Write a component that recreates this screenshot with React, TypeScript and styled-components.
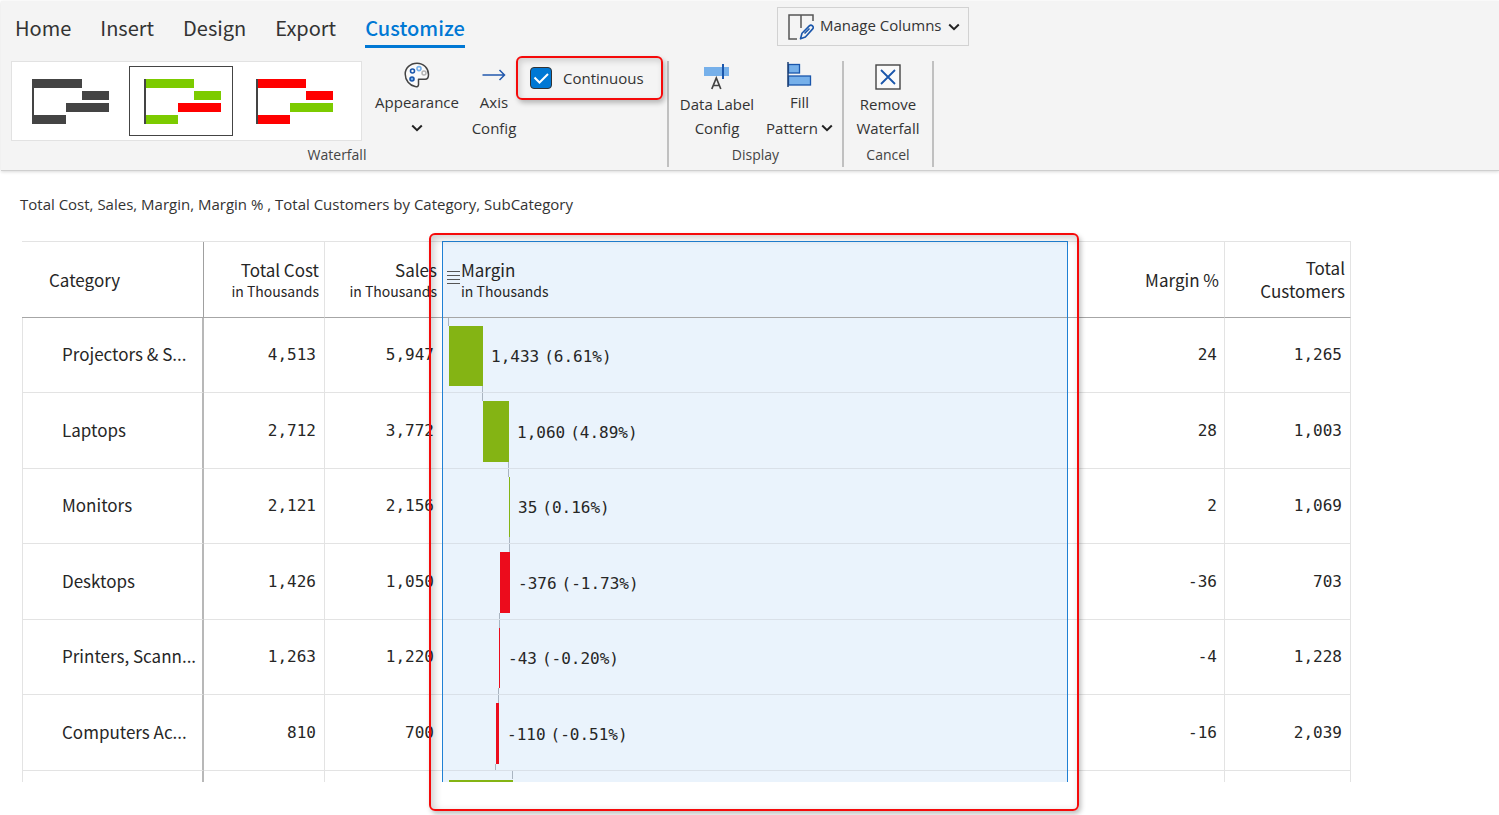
import React from 'react';
import styled, { createGlobalStyle, css } from 'styled-components';

const sans = '"Noto Sans CJK SC", "Noto Sans", sans-serif';
const label = '"Open Sans", "Noto Sans", sans-serif';
const mono = '"DejaVu Sans Mono", "Liberation Mono", monospace';

const GlobalStyle = createGlobalStyle`
  *, *::before, *::after { box-sizing: border-box; }
  body { margin: 0; background: #fff; color: #262626; font-family: ${sans}; font-size: 15px; }
  button { font: inherit; color: inherit; background: none; border: 0; padding: 0; cursor: pointer; }
`;

/* ---------- ribbon ---------- */

const Ribbon = styled.header`
  margin: 1px 0 0 1px;
  background: #f4f4f4;
  border-bottom: 1px solid #cfcfcf;
  box-shadow: 0 1px 3px rgba(0, 0, 0, 0.15);
  font-family: ${label};
`;

const TopRow = styled.div`
  display: flex;
  align-items: flex-start;
  height: 55px;
  padding: 6px 0 0 14px;
`;

const Tabs = styled.nav`
  display: flex;
  gap: 29px;
  width: 762px;
  padding-top: 5px;
  font-family: ${sans};
`;

const Tab = styled.button<{ $active?: boolean }>`
  height: 36px;
  font-size: 20px;
  line-height: 30px;
  padding-bottom: 2px;
  color: #333;
  border-bottom: 3px solid transparent;
  ${p => p.$active && css`
    color: #0078d4;
    font-weight: 500;
    border-bottom-color: #0078d4;
  `}
`;

const ManageButton = styled.button`
  display: flex;
  align-items: center;
  gap: 6px;
  height: 39px;
  padding: 0 8px 0 10px;
  border: 1px solid #d2d2d2;
  color: #333;
  line-height: 24px;
`;

const ManageText = styled.span`
  padding-bottom: 3px;
`;

const Groups = styled.div`
  display: flex;
  padding: 0 0 3px 6px;
`;

const Group = styled.section`
  display: flex;
  flex-direction: column;
  justify-content: space-between;
  height: 106px;
  margin-top: 5px;
  padding: 0 4px;
  border-right: 2px solid #c0c0c0;
`;

const GroupTools = styled.div`
  display: flex;
  align-items: flex-start;
  height: 80px;
`;

const GroupName = styled.h2`
  margin: 0;
  height: 24px;
  font-size: 14px;
  font-weight: 400;
  line-height: 24px;
  text-align: center;
  color: #444;
`;

const Gallery = styled.div`
  display: flex;
  align-items: center;
  gap: 8px;
  width: 351px;
  height: 80px;
  padding: 0 5px;
  background: #fff;
  border: 1px solid #e2e2e2;
`;

const Preset = styled.button<{ $active?: boolean }>`
  width: 104px;
  height: 70px;
  padding: 2px 0 0 4px;
  border: 1px solid ${p => (p.$active ? '#444' : 'transparent')};
  display: grid;
  place-items: center;
`;

const IconSlot = styled.span`
  display: grid;
  place-items: center;
  height: 30px;
`;

const Tool = styled.button<{ $width: number; $loose?: boolean }>`
  display: flex;
  flex-direction: column;
  align-items: center;
  width: ${p => p.$width}px;
  color: #333;
  line-height: ${p => (p.$loose ? 26 : 24)}px;
  white-space: nowrap;
  svg { flex: none; }
  ${IconSlot} { height: ${p => (p.$loose ? 28 : 31)}px; }
`;

const WithArrow = styled.span`
  display: flex;
  align-items: center;
  gap: 3px;
  min-height: 26px;
`;

const CheckField = styled.label`
  display: flex;
  align-items: center;
  gap: 11px;
  height: 44px;
  width: 147px;
  margin-top: -5px;
  padding: 0 12px;
  border: 2px solid #f50a0a;
  border-radius: 6px;
  box-shadow: 2px 3px 5px rgba(0, 0, 0, 0.25), inset 2px 3px 6px rgba(0, 0, 0, 0.15);
  color: #333;
`;

const CheckBox = styled.span`
  display: grid;
  flex: none;
  width: 22px;
  height: 22px;
  svg, input { grid-area: 1 / 1; }
  svg { pointer-events: none; }
`;

const CheckInput = styled.input`
  appearance: none;
  width: 22px;
  height: 22px;
  margin: 0;
  border: 1px solid #333;
  border-radius: 4px;
  background: #fff;
  &:checked { background: #0078d4; }
  &:not(:checked) + svg { visibility: hidden; }
`;

/* ---------- report ---------- */

const Report = styled.main`
  padding: 19px 148px 33px 22px;
`;

const Title = styled.h1`
  margin: 0 0 23px -2px;
  font-family: ${label};
  font-size: 15px;
  font-weight: 400;
  line-height: 28px;
  color: #333;
`;

const TableFrame = styled.div`
  position: relative;
  isolation: isolate;
`;

const Table = styled.table`
  width: 100%;
  table-layout: fixed;
  border-collapse: separate;
  border-spacing: 0;
  border-top: 1px solid #e3e3e3;
`;

const Th = styled.th<{ $align?: 'left' | 'right'; $edge?: 'strong' | 'light' | 'none' }>`
  height: 76px;
  padding: 0 5px 1px;
  font-size: 17px;
  font-weight: 400;
  line-height: 23px;
  text-align: ${p => p.$align ?? 'right'};
  border-bottom: 1px solid #a6a6a6;
  border-right: ${p =>
    p.$edge === 'strong' ? '1px solid #a0a0a0' : p.$edge === 'none' ? '0' : '1px solid #e3e3e3'};
  &:first-child { padding-left: 27px; }
`;

const Unit = styled.small`
  display: block;
  font-size: 14px;
  line-height: 20px;
`;

const MarginHead = styled.div`
  display: flex;
  align-items: center;
`;

const Row = styled.tr<{ $height: number }>`
  height: ${p => p.$height}px;
`;

const Td = styled.td<{ $edge?: 'none' | 'light'; $inset?: number; $last?: boolean }>`
  padding: 0 ${p => p.$inset ?? 8}px 0 0;
  font: 16px/24px ${mono};
  text-align: right;
  border-bottom: ${p => (p.$last ? '0' : '1px solid #e3e3e3')};
  border-right: ${p => (p.$edge === 'none' ? '0' : '1px solid #e3e3e3')};
`;

const NameCell = styled.th<{ $last?: boolean }>`
  padding: 0 4px 2px 39px;
  font-size: 17px;
  font-weight: 400;
  line-height: 24px;
  text-align: left;
  white-space: nowrap;
  border-left: 1px solid #e3e3e3;
  border-right: 2px solid #b8b8b8;
  border-bottom: ${p => (p.$last ? '0' : '1px solid #e3e3e3')};
`;

const BarCell = styled.td<{ $last?: boolean }>`
  padding: 0;
  font: 16px/24px ${mono};
  vertical-align: top;
  border-bottom: ${p => (p.$last ? '0' : '1px solid #d9e0e8')};
`;

const BarLine = styled.div`
  display: flex;
  align-items: center;
  gap: 8px;
  svg { display: block; flex: none; }
`;

const BarLabel = styled.span`
  display: flex;
  gap: 5px;
  padding-top: 4px;
`;

const SelectionFill = styled.div`
  position: absolute;
  z-index: -1;
  inset: 0 283px 0 420px;
  background: #eaf3fc;
`;

const SelectionFrame = styled.div`
  position: absolute;
  inset: 0 283px 0 420px;
  border: 1px solid #2080d4;
  border-bottom: 0;
  pointer-events: none;
`;

const Callout = styled.div`
  position: absolute;
  inset: -8px 272px -29px 407px;
  border: 2px solid #f50a0a;
  border-radius: 6px;
  box-shadow: 2px 3px 5px rgba(0, 0, 0, 0.25), inset 3px 3px 8px rgba(0, 0, 0, 0.2);
  pointer-events: none;
`;

/* ---------- drawings ---------- */

const Chevron = () => (
  <svg width="12" height="8" viewBox="0 0 12 8" fill="none" stroke="#222" strokeWidth="2" aria-hidden="true">
    <path d="M1.2 1.5 6 6.2l4.8-4.7" />
  </svg>
);

const PresetArt = ({ up, down, total }: { up: string; down: string; total: string }) => (
  <svg width="78" height="46" viewBox="0 0 78 46" aria-hidden="true">
    <rect x="1" y="0" width="49" height="9" fill={up} />
    <rect x="50" y="12" width="27" height="9" fill={up} />
    <rect x="34" y="24" width="43" height="9" fill={down} />
    <rect x="1" y="36" width="33" height="9" fill={total} />
    <rect x="0" y="0" width="2" height="45" fill="#444" />
  </svg>
);

const PaletteIcon = () => (
  <svg width="26" height="26" viewBox="0 0 26 26" fill="none" aria-hidden="true">
    <path
      d="M13 1.2C6.2 1.2 1.2 6 1.2 12c0 6.3 4.4 11.6 10 12.6 1.8.3 3.3-.1 3.3-1.8V17.300h6.600c2.200 0 3.400-1.900 3.400-4.800C24.500 6.400 19.600 1.200 13 1.200Z"
      stroke="#444" strokeWidth="1.5" strokeLinejoin="round" fill="#fafafa"
    />
    <circle cx="8.500" cy="9" r="2" stroke="#1a56ab" strokeWidth="1.6" />
    <circle cx="15" cy="6.600" r="2" stroke="#76b0ea" strokeWidth="1.6" />
    <circle cx="20" cy="11" r="2" stroke="#b4b4b4" strokeWidth="1.5" />
    <circle cx="8" cy="17" r="2" stroke="#1a56ab" strokeWidth="1.6" fill="#76b0ea" />
  </svg>
);

const ArrowIcon = () => (
  <svg width="24" height="12" viewBox="0 0 24 12" fill="none" stroke="#2258ad" strokeWidth="1.5" aria-hidden="true">
    <path d="M.5 6h22M17.500 1l5 5-5 5" />
  </svg>
);

const DataLabelIcon = () => (
  <svg width="26" height="26" viewBox="0 0 26 26" fill="none" aria-hidden="true">
    <rect x="0" y="3" width="25" height="9" fill="#76b0ea" />
    <path d="M19 0v15" stroke="#1a56ab" strokeWidth="2" />
    <path d="M7.800 25 12.300 14l4.500 11M9.300 21.500h6" stroke="#444" strokeWidth="1.7" />
  </svg>
);

const FillIcon = () => (
  <svg width="25" height="26" viewBox="0 0 25 26" aria-hidden="true">
    <rect x="1.500" y="2.500" width="11" height="8.500" fill="#76b0ea" stroke="#1a56ab" strokeWidth="1.3" />
    <rect x="1.500" y="14" width="22" height="9" fill="#76b0ea" stroke="#1a56ab" strokeWidth="1.3" />
    <path d="M1 0v25" stroke="#1d3f73" strokeWidth="1.5" />
  </svg>
);

const RemoveIcon = () => (
  <svg width="26" height="26" viewBox="0 0 26 26" fill="none" aria-hidden="true">
    <rect x="1" y="1" width="24" height="24" fill="#fafafa" stroke="#444" strokeWidth="1.4" />
    <path d="m6 6 14 14M20 6 6 20" stroke="#1a56ab" strokeWidth="1.8" />
  </svg>
);

const ColumnsIcon = () => (
  <svg width="26" height="26" viewBox="0 0 26 26" fill="none" aria-hidden="true">
    <path d="M9 25H1V1h24v6M13 1v13" stroke="#555" strokeWidth="1.5" />
    <path
      d="M12.500 24.800 14 19.300l7.300-7.400a2.200 2.200 0 0 1 3.200 3.200L17.400 23l-4.900 1.800ZM16.500 19.500l5-5"
      stroke="#1a56ab" strokeWidth="1.6" strokeLinejoin="round"
    />
  </svg>
);

const GripIcon = () => (
  <svg width="14" height="18" viewBox="0 0 14 18" stroke="#555" aria-hidden="true">
    <path d="M0 1.500h13M0 5.500h13M0 9.500h13M0 13.500h13" />
  </svg>
);

/* ---------- data ---------- */

const rows = [
  { name: 'Projectors & S...', cost: '4,513', sales: '5,947', value: '1,433', share: '(6.61%)', pct: '24', customers: '1,265', from: 7, to: 41 },
  { name: 'Laptops', cost: '2,712', sales: '3,772', value: '1,060', share: '(4.89%)', pct: '28', customers: '1,003', from: 41, to: 67 },
  { name: 'Monitors', cost: '2,121', sales: '2,156', value: '35', share: '(0.16%)', pct: '2', customers: '1,069', from: 67, to: 68 },
  { name: 'Desktops', cost: '1,426', sales: '1,050', value: '-376', share: '(-1.73%)', pct: '-36', customers: '703', from: 68, to: 58 },
  { name: 'Printers, Scann...', cost: '1,263', sales: '1,220', value: '-43', share: '(-0.20%)', pct: '-4', customers: '1,228', from: 58, to: 57 },
  { name: 'Computers Ac...', cost: '810', sales: '700', value: '-110', share: '(-0.51%)', pct: '-16', customers: '2,039', from: 57, to: 54 },
];

const StepBar = ({ from, to, height }: { from: number; to: number; height: number }) => {
  const left = Math.min(from, to);
  const right = Math.max(from, to);
  return (
    <svg width={right} height={height} aria-hidden="true">
      <rect x={from - 1} y="0" width="1" height="8" fill="#a9b4c0" />
      <rect x={left} y="8" width={right - left} height={height - 14} fill={to > from ? '#84b414' : '#ec0c1c'} />
      <rect x={to - 1} y={height - 6} width="1" height="6" fill="#a9b4c0" />
    </svg>
  );
};

export default function App() {
  return (
    <>
      <GlobalStyle />
      <Ribbon>
        <TopRow>
          <Tabs aria-label="Ribbon">
            <Tab>Home</Tab>
            <Tab>Insert</Tab>
            <Tab>Design</Tab>
            <Tab>Export</Tab>
            <Tab $active>Customize</Tab>
          </Tabs>
          <ManageButton>
            <ColumnsIcon />
            <ManageText>Manage Columns</ManageText>
            <Chevron />
          </ManageButton>
        </TopRow>
        <Groups>
          <Group>
            <GroupTools>
              <Gallery>
                <Preset aria-label="Neutral colors"><PresetArt up="#444" down="#444" total="#444" /></Preset>
                <Preset $active aria-label="Green increase"><PresetArt up="#7ccb00" down="#ff0000" total="#7ccb00" /></Preset>
                <Preset aria-label="Red increase"><PresetArt up="#ff0000" down="#7ccb00" total="#ff0000" /></Preset>
              </Gallery>
              <Tool $width={110} $loose>
                <IconSlot><PaletteIcon /></IconSlot>
                <span>Appearance</span>
                <WithArrow><Chevron /></WithArrow>
              </Tool>
              <Tool $width={44} $loose>
                <IconSlot><ArrowIcon /></IconSlot>
                <span>Axis</span>
                <span>Config</span>
              </Tool>
              <CheckField>
                <CheckBox>
                  <CheckInput type="checkbox" defaultChecked />
                  <svg width="22" height="22" viewBox="0 0 22 22" fill="none" stroke="#fff" strokeWidth="2" aria-hidden="true">
                    <path d="m4.500 10.500 5 5 8.500-8.500" />
                  </svg>
                </CheckBox>
                Continuous
              </CheckField>
            </GroupTools>
            <GroupName>Waterfall</GroupName>
          </Group>
          <Group>
            <GroupTools>
              <Tool $width={88}>
                <IconSlot><DataLabelIcon /></IconSlot>
                <span>Data Label</span>
                <span>Config</span>
              </Tool>
              <Tool $width={77} $loose>
                <IconSlot><FillIcon /></IconSlot>
                <span>Fill</span>
                <WithArrow>Pattern<Chevron /></WithArrow>
              </Tool>
            </GroupTools>
            <GroupName>Display</GroupName>
          </Group>
          <Group>
            <GroupTools>
              <Tool $width={80}>
                <IconSlot><RemoveIcon /></IconSlot>
                <span>Remove</span>
                <span>Waterfall</span>
              </Tool>
            </GroupTools>
            <GroupName>Cancel</GroupName>
          </Group>
        </Groups>
      </Ribbon>

      <Report>
        <Title>Total Cost, Sales, Margin, Margin % , Total Customers by Category, SubCategory</Title>
        <TableFrame>
          <SelectionFill />
          <Table>
            <colgroup>
              <col style={{ width: 182 }} />
              <col style={{ width: 121 }} />
              <col style={{ width: 117 }} />
              <col />
              <col style={{ width: 156 }} />
              <col style={{ width: 126 }} />
            </colgroup>
            <thead>
              <tr>
                <Th $align="left" $edge="strong">Category</Th>
                <Th>Total Cost<Unit>in Thousands</Unit></Th>
                <Th $edge="none">Sales<Unit>in Thousands</Unit></Th>
                <Th $align="left" $edge="none">
                  <MarginHead>
                    <GripIcon />
                    <div>Margin<Unit>in Thousands</Unit></div>
                  </MarginHead>
                </Th>
                <Th>Margin %</Th>
                <Th>Total Customers</Th>
              </tr>
            </thead>
            <tbody>
              {rows.map((r, i) => {
                const height = i % 2 ? 76 : 75;
                return (
                  <Row key={r.name} $height={height}>
                    <NameCell scope="row">{r.name}</NameCell>
                    <Td>{r.cost}</Td>
                    <Td $edge="none">{r.sales}</Td>
                    <BarCell>
                      <BarLine>
                        <StepBar from={r.from} to={r.to} height={height - 1} />
                        <BarLabel><span>{r.value}</span><span>{r.share}</span></BarLabel>
                      </BarLine>
                    </BarCell>
                    <Td $inset={7}>{r.pct}</Td>
                    <Td>{r.customers}</Td>
                  </Row>
                );
              })}
              <Row $height={11}>
                <NameCell as="td" $last />
                <Td $last />
                <Td $edge="none" $last />
                <BarCell $last>
                  <BarLine>
                    <svg width="72" height="11" aria-hidden="true">
                      <rect x="70" y="0" width="1" height="8" fill="#a9b4c0" />
                      <rect x="7" y="9" width="64" height="2" fill="#84b414" />
                    </svg>
                  </BarLine>
                </BarCell>
                <Td $last />
                <Td $last />
              </Row>
            </tbody>
          </Table>
          <SelectionFrame />
          <Callout />
        </TableFrame>
      </Report>
    </>
  );
}
